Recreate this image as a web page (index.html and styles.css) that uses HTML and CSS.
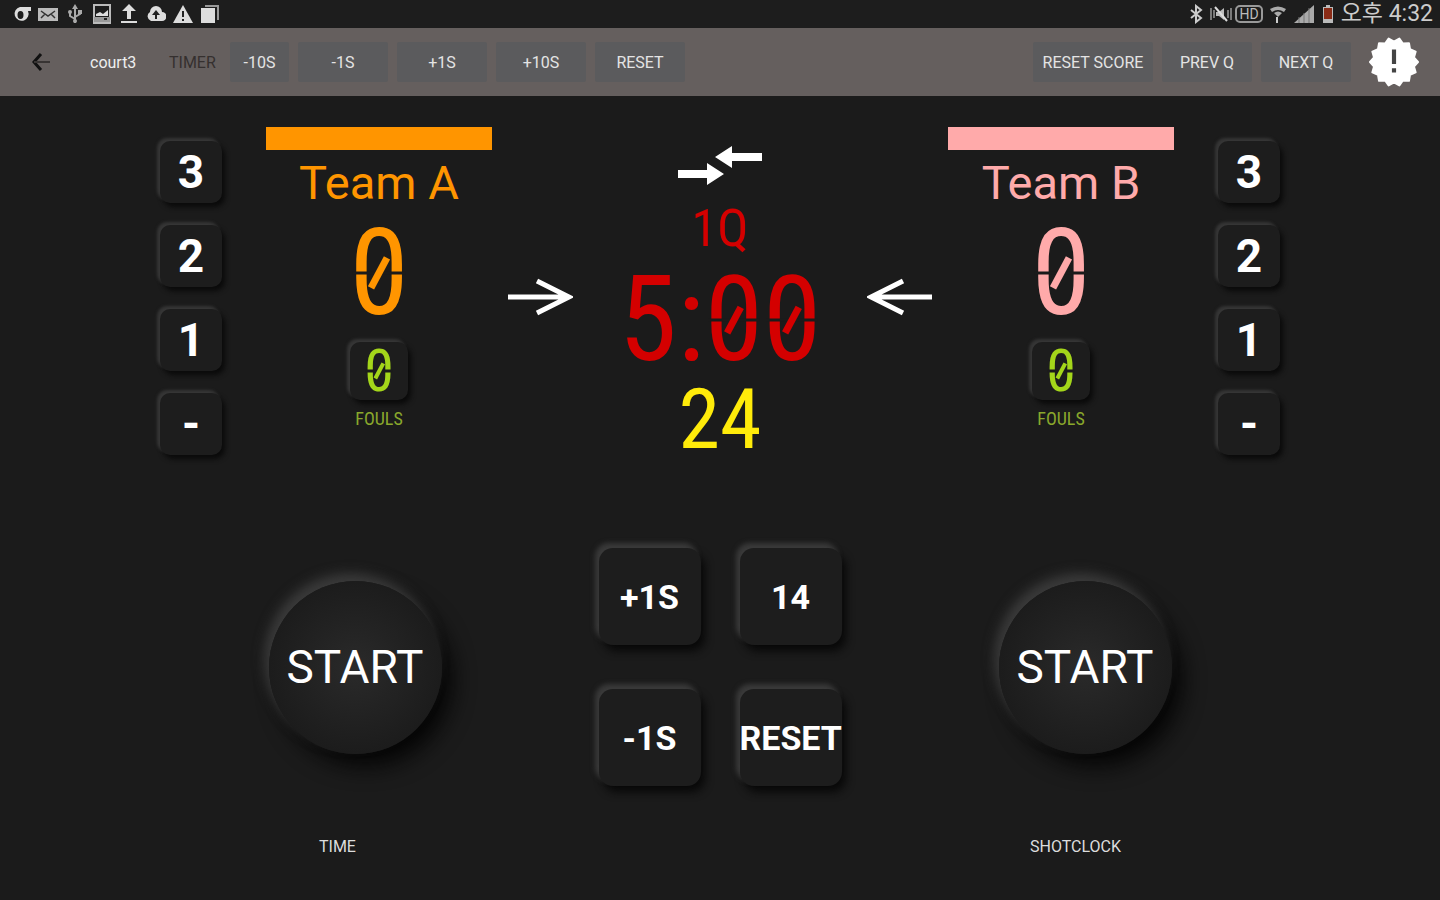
FILE: index.html
```html
<!DOCTYPE html>
<html lang="ko">

<head>
    <meta charset="UTF-8">
    <meta name="viewport" content="width=device-width, initial-scale=1.0">
    <title>Scoreboard</title>
    <link rel="stylesheet" href="styles.css">
</head>

<body>
    <div class="statusbar">
        <div class="status-icons">
            <svg viewBox="0 0 20 20"><path d="M9 3h11v4h-3a7 7 0 1 1-8-4z" fill="#ddd"/><ellipse cx="9.500" cy="11" rx="3" ry="4" fill="#1d1d1d"/></svg>
            <svg viewBox="0 0 20 20"><path d="M0 4h20v13H0z" fill="#bbb"/><path d="M3 7l7 5 7-5M3 14l4-4M17 14l-4-4" fill="none" stroke="#333" stroke-width="1.500"/></svg>
            <svg viewBox="0 0 20 20"><path d="M10 3v16M10 15l-5-3V8M10 13l5-3V7" fill="none" stroke="#aaa" stroke-width="2"/><path d="M7 5l3-5 3 5z" fill="#aaa"/><circle cx="5" cy="8" r="2" fill="#aaa"/><path d="M13 6h4v4h-4z" fill="#aaa"/><circle cx="10" cy="17" r="2" fill="#aaa"/></svg>
            <svg viewBox="0 0 20 20"><path d="M2 1h16v18H2z" fill="none" stroke="#bbb" stroke-width="2"/><path d="M4 10l4-2 3 2 5-4v6H4z" fill="#ddd"/><path d="M2 13h16v5H2z" fill="#999"/><path d="M12 15h3" stroke="#222" stroke-width="2"/></svg>
            <svg viewBox="0 0 20 20"><path d="M10 0l7 7h-5v8H8V7H3zM2 17h16v2H2z" fill="#ddd"/></svg>
            <svg viewBox="0 0 20 20"><path d="M5 17a5 5 0 0 1-1-9 6 6 0 0 1 12 0 4.500 4.500 0 0 1 0 9z" fill="#ddd"/><path d="M10 6l4 5h-3v4H9v-4H6z" fill="#222"/></svg>
            <svg viewBox="0 0 20 20"><path d="M10 1l10 18H0z" fill="#ddd"/><path d="M9 7h2v6H9zM9 15h2v2H9z" fill="#222"/></svg>
            <svg viewBox="0 0 20 20"><path d="M5 1h14v15h-2V3H5z" fill="#999"/><path d="M1 4h14v15H1z" fill="#ddd"/></svg>
        </div>
        <div class="status-right">
            <svg class="ic-bt" viewBox="0 0 14 20"><path d="M2 6l10 8-5 4V2l5 4-10 8" fill="none" stroke="#ccc" stroke-width="2"/></svg>
            <svg class="ic-vib" viewBox="0 0 22 20"><path d="M1 4v12M4 6v8M21 4v12M18 6v8" stroke="#999" stroke-width="1.500"/><path d="M6 8h3l5-4v12l-5-4H6z" fill="#bbb"/><path d="M5 3l12 14" stroke="#ddd" stroke-width="2"/></svg>
            <span class="hd">HD</span>
            <svg class="ic-wifi" viewBox="0 0 16 20"><path d="M0 5q8-5 16 0l-2 3q-6-4-12 0zM4 9q4-3 8 0l-4 4z" fill="#aaa"/><path d="M7 13v6" stroke="#ccc" stroke-width="2"/></svg>
            <svg class="ic-signal" viewBox="0 0 22 20"><path d="M21 1v18H1z" fill="#aaa"/><path d="M6 13v6M11 9v10M16 4v15" stroke="#777"/></svg>
            <svg class="ic-battery" viewBox="0 0 12 20"><path d="M4 1h4v2h3v16H1V3h3z" fill="#bbb"/><path d="M2 4h8v11H2z" fill="#8b2c17"/></svg>
            <span class="clock">오후 4:32</span>
        </div>
    </div>

    <header class="toolbar">
        <button class="back" aria-label="Back">
            <svg viewBox="0 0 18 18"><path d="M9 1L2 9l7 8" fill="none" stroke="#111" stroke-width="3"/><path d="M2 9h16" stroke="#383433" stroke-width="2"/></svg>
        </button>
        <span class="court">court3</span>
        <span class="timer-label">TIMER</span>
        <div class="tools">
            <button class="tool small">-10S</button>
            <button class="tool">-1S</button>
            <button class="tool">+1S</button>
            <button class="tool">+10S</button>
            <button class="tool">RESET</button>
        </div>
        <div class="tools right">
            <button class="tool wide">RESET SCORE</button>
            <button class="tool">PREV Q</button>
            <button class="tool">NEXT Q</button>
        </div>
        <button class="alert" aria-label="Info">
            <svg viewBox="-12 -12 24 24">
                <path d="M11.500 0L9.550 2.180 10.360 4.990 7.660 6.110 7.170 8.990 4.250 8.830 2.560 11.210 0 9.800-2.560 11.210-4.250 8.830-7.170 8.990-7.660 6.110-10.360 4.990-9.550 2.180-11.500 0-9.550-2.180-10.360-4.990-7.660-6.110-7.170-8.990-4.250-8.830-2.560-11.210 0-9.800 2.560-11.210 4.250-8.830 7.170-8.990 7.660-6.110 10.360-4.990 9.550-2.180z" fill="#fff" stroke="#fff" stroke-linejoin="round"/>
                <path d="M-1-6h2v7h-2zM-1 3h2v2h-2z" fill="#444"/>
            </svg>
        </button>
    </header>

    <main>
        <section class="board">
            <div class="points">
                <button class="key">3</button>
                <button class="key">2</button>
                <button class="key">1</button>
                <button class="key">-</button>
            </div>
            <div class="team team-a">
                <div class="bar"></div>
                <h2>Team A</h2>
                <div class="score led"><span class="zero">0</span></div>
                <button class="key foul led"><span class="zero">0</span></button>
                <div class="foul-label led">FOULS</div>
            </div>
            <button class="side" aria-label="Possession A">
                <svg viewBox="0 0 66 38"><path d="M1 19h61M30 3l32 16-32 16" fill="none" stroke="#fff" stroke-width="5"/></svg>
            </button>
            <div class="clocks">
                <button class="swap" aria-label="Swap sides">
                    <svg viewBox="0 0 84 40"><path d="M37 11L54 0v7h30v8H54v7zM46 28L29 39v-7H0v-8h29v-7z" fill="#fff"/></svg>
                </button>
                <div class="quarter led">1Q</div>
                <div class="game led">5:<span class="zero">0</span><span class="zero">0</span></div>
                <div class="shot led">24</div>
            </div>
            <button class="side" aria-label="Possession B">
                <svg viewBox="0 0 66 38"><path d="M65 19H4M36 3L4 19l32 16" fill="none" stroke="#fff" stroke-width="5"/></svg>
            </button>
            <div class="team team-b">
                <div class="bar"></div>
                <h2>Team B</h2>
                <div class="score led"><span class="zero">0</span></div>
                <button class="key foul led"><span class="zero">0</span></button>
                <div class="foul-label led">FOULS</div>
            </div>
            <div class="points">
                <button class="key">3</button>
                <button class="key">2</button>
                <button class="key">1</button>
                <button class="key">-</button>
            </div>
        </section>

        <section class="controls">
            <button class="start">START</button>
            <div class="pad">
                <button class="key">+1S</button>
                <button class="key">14</button>
                <button class="key">-1S</button>
                <button class="key">RESET</button>
            </div>
            <button class="start">START</button>
        </section>

        <div class="captions">
            <span>TIME</span>
            <span>SHOTCLOCK</span>
        </div>
    </main>
</body>

</html>
```
FILE: styles.css
```css
* {
    box-sizing: border-box;
}

body {
    margin: 0;
    min-height: 100vh;
    background: #1b1b1b;
    color: #fff;
    font-family: Roboto, "Noto Sans CJK KR", sans-serif;
    font-size: 16px;
}

button {
    padding: 0;
    border: none;
    background: none;
    color: inherit;
    font-family: inherit;
    cursor: pointer;
}

svg {
    display: block;
    width: 100%;
    height: 100%;
}

/* status bar */
.statusbar {
    display: flex;
    justify-content: space-between;
    align-items: center;
    height: 28px;
    padding: 0 7px 0 11px;
    background: #1d1d1d;
}

.status-icons {
    display: flex;
    gap: 7px;
}

.status-icons svg {
    width: 20px;
    height: 20px;
}

.status-right {
    display: flex;
    align-items: center;
    gap: 7px;
}

.status-right svg {
    height: 20px;
}

.status-right .ic-bt {
    width: 14px;
}

.status-right .ic-vib {
    width: 22px;
}

.status-right .ic-wifi {
    width: 16px;
}

.status-right .ic-signal {
    width: 22px;
}

.status-right .ic-battery {
    width: 12px;
}

.hd {
    padding: 0 2px;
    margin-left: -4px;
    border: 2px solid #999;
    border-radius: 5px;
    color: #bbb;
    font-size: 14px;
    line-height: 14px;
}

.clock {
    color: #ccc;
    font-size: 23px;
    line-height: 28px;
}

/* toolbar */
.toolbar {
    display: flex;
    align-items: center;
    height: 68px;
    padding: 0 21px 0 32px;
    background: #655f5e;
}

.back {
    width: 18px;
    height: 18px;
    margin-right: 40px;
}

.court {
    width: 79px;
    color: #eee;
}

.timer-label {
    width: 61px;
    color: #35302f;
}

.tools {
    display: flex;
    gap: 9px;
}

.tools.right {
    margin-left: auto;
}

.tool {
    width: 90px;
    height: 40px;
    border-radius: 2px;
    background: #5b5b5d;
    color: #e4e4e4;
    font-size: 16px;
}

.tool.small {
    width: 59px;
}

.tool.wide {
    width: 120px;
}

.alert {
    width: 50px;
    height: 50px;
    margin-left: 18px;
}

/* raised keys */
.key {
    border-radius: 10px;
    background: #1d1d1d;
    font-weight: bold;
    box-shadow: -3px -3px 3px #363636, 3px 4px 5px #0a0a0a;
}

/* score board */
.board {
    display: flex;
    justify-content: center;
    align-items: flex-start;
    padding-top: 31px;
}

.points {
    display: flex;
    flex-direction: column;
    gap: 22px;
    padding-top: 14px;
}

.points .key {
    width: 62px;
    height: 62px;
    font-size: 46px;
}

.led {
    font-family: "Roboto Condensed", "Liberation Sans Narrow", sans-serif;
    font-weight: normal;
    text-align: center;
}

/* slashed zero with the split between upper and lower segments */
.zero {
    display: inline-block;
    position: relative;
}

.zero::before,
.zero::after {
    content: "";
    position: absolute;
    top: 50%;
    left: 50%;
}

.zero::before {
    width: 90%;
    height: 3px;
    background: #1b1b1b;
    transform: translate(-50%, -50%);
}

.zero::after {
    width: 12%;
    height: 30%;
    background: currentColor;
    transform: translate(-50%, -50%) rotate(28deg);
}

.team {
    display: flex;
    flex-direction: column;
    align-items: center;
    width: 226px;
    margin: 0 15px 0 44px;
}

.team-b {
    margin: 0 44px 0 15px;
}

.team-a {
    color: #ff9500;
}

.team-b {
    color: #ffaaaa;
}

.bar {
    width: 100%;
    height: 23px;
    background: currentColor;
}

.team h2 {
    margin: 0;
    font-size: 47px;
    font-weight: normal;
    line-height: 66px;
}

.score {
    font-size: 120px;
    line-height: 114px;
}

.foul {
    width: 58px;
    height: 58px;
    margin-top: 12px;
    color: #a4d61a;
    font-size: 60px;
    line-height: 58px;
}

.foul-label {
    color: #8aa82c;
    font-size: 18px;
    line-height: 38px;
}

.side {
    width: 66px;
    height: 38px;
    margin-top: 151px;
}

.clocks {
    display: flex;
    flex-direction: column;
    align-items: center;
    width: 294px;
    padding-top: 19px;
}

.swap {
    width: 84px;
    height: 40px;
}

.quarter {
    color: #d40000;
    font-size: 52px;
    line-height: 86px;
}

.game {
    color: #d40000;
    font-size: 118px;
    line-height: 96px;
}

.shot {
    color: #ffeb0a;
    font-size: 84px;
    line-height: 104px;
}

/* start buttons and shot clock pad */
.controls {
    display: flex;
    justify-content: center;
    align-items: center;
    gap: 157px;
    padding-top: 76px;
}

.start {
    width: 173px;
    height: 173px;
    border-radius: 50%;
    background: radial-gradient(circle, #2a2a2a, #1b1b1b 75%);
    box-shadow: -5px -8px 12px #3a3a3a, 10px 12px 22px #050505;
    font-size: 46px;
}

.pad {
    display: grid;
    grid-template-columns: 102px 102px;
    gap: 44px 39px;
}

.pad .key {
    width: 102px;
    height: 97px;
    border-radius: 14px;
    font-size: 34px;
    white-space: nowrap;
    box-shadow: -4px -5px 5px #3a3a3a, 4px 6px 8px #080808;
}

.captions {
    display: flex;
    justify-content: space-between;
    padding: 51px 319px 0;
    color: #ddd;
    line-height: 20px;
}
```
